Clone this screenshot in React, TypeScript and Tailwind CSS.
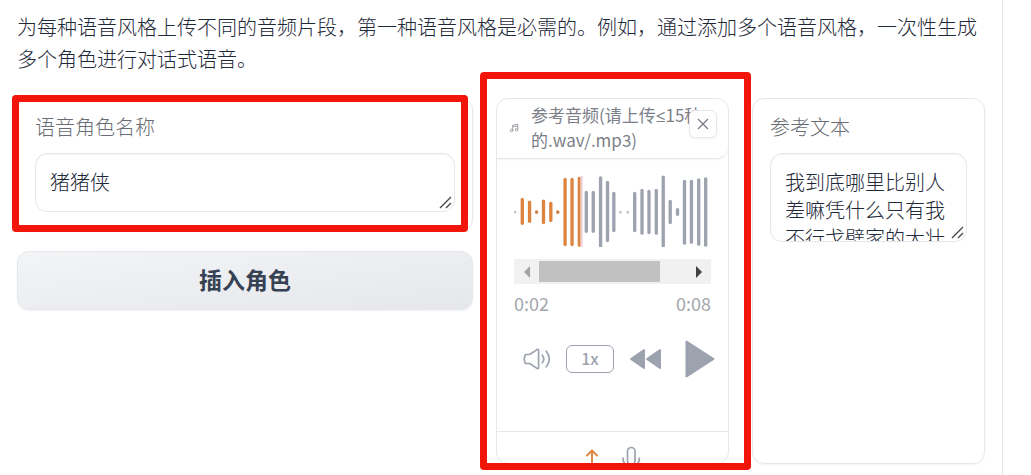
import { useState } from 'react';

// [x, top, bottom] of every wave form bar
const BARS: [number, number, number][] = [
  [3, 117, 118], [25, 79, 151], [47, 87, 145], [68, 117, 118], [89, 84, 149],
  [111, 91, 143], [132, 117, 118], [154, 19, 215], [175, 19, 215], [197, 16, 217],
  [218, 58, 175], [239, 58, 175], [261, 14, 219], [282, 28, 203], [301, 61, 173],
  [321, 117, 118], [343, 117, 118], [364, 61, 173], [386, 52, 181], [407, 55, 179],
  [429, 52, 181], [450, 12, 219], [471, 85, 149], [493, 110, 124], [514, 25, 211],
  [535, 25, 208], [557, 20, 214], [578, 17, 217],
];

const PLAYED = 204;

function barColor(x: number, top: number) {
  if (x < 10 || x === 321 || x === 343) return '#c3c5ca';
  if (x < PLAYED) return top > 100 ? '#c98046' : '#dd8440';
  return '#9ca3af';
}

function Waveform() {
  return (
    <svg viewBox="0 0 594 222" className="block h-[74px] w-full" fill="none" strokeLinecap="round">
      {BARS.map(([x, top, bottom]) => (
        <line
          key={x}
          x1={x}
          x2={x}
          y1={top}
          y2={bottom}
          stroke={barColor(x, top)}
          strokeWidth={x < 10 || x === 321 || x === 343 ? 8 : 10}
        />
      ))}
      <rect x={PLAYED - 4} y="9" width="7" height="213" fill="#f0d0d4" />
    </svg>
  );
}

function ResizeGrip() {
  return (
    <svg
      viewBox="0 0 14 14"
      className="pointer-events-none absolute right-0.5 bottom-0.5 size-3.5"
      stroke="#444"
      strokeWidth="1.3"
    >
      <path d="M1 12 12 1M7 12l5-5" />
    </svg>
  );
}

interface TextFieldProps {
  id: string;
  label: string;
  initial: string;
  size: string;
}

function TextField({ id, label, initial, size }: TextFieldProps) {
  const [value, setValue] = useState(initial);

  return (
    <div className="rounded-xl border border-gray-200 px-[17px] pt-3.5 pb-[18px] shadow-xs">
      <label htmlFor={id} className="mb-3 block text-xl leading-7 text-[#686c75]">
        {label}
      </label>
      <div className="relative">
        <textarea
          id={id}
          value={value}
          onChange={(e) => setValue(e.target.value)}
          className={`block w-full resize-none overflow-hidden rounded-xl border border-gray-200 px-3.5 pt-3.5 text-xl leading-7 text-gray-800 inset-shadow-xs outline-none ${size}`}
        />
        <ResizeGrip />
      </div>
    </div>
  );
}

function AudioPanel() {
  return (
    <div className="flex flex-col overflow-hidden rounded-xl border border-gray-200">
      {/* Label */}
      <div className="relative flex items-center gap-3 rounded-br-xl border-b border-gray-200 pt-1 pr-2.5 pb-1.5 pl-3 shadow-xs">
        <svg viewBox="0 0 24 24" className="size-2.5 shrink-0" fill="none" stroke="#8b8f97" strokeWidth="2">
          <path d="M9 18V5l12-2v13M9 9l12-2" />
          <circle cx="6" cy="18" r="3" />
          <circle cx="18" cy="16" r="3" />
        </svg>
        <p className="text-[17px] leading-6 font-normal text-[#7c8089]">
          参考音频(请上传<span className="font-['Open_Sans',sans-serif]">≤</span>15秒
          <br />
          的.wav/.mp3)
        </p>
        <button
          aria-label="清除"
          className="absolute top-[11px] right-[11px] flex size-7 items-center justify-center rounded-md border border-gray-200 bg-white shadow-xs"
        >
          <svg viewBox="0 0 12 12" className="size-3" stroke="#777b83" strokeWidth="1.3">
            <path d="M1 1l10 10M11 1 1 11" />
          </svg>
        </button>
      </div>

      {/* Player */}
      <div className="px-[17px] pt-3.5 pb-[52px]">
        <Waveform />
        <div className="mt-3 flex h-[25px] items-center bg-[#f1f1f1]">
          <button aria-label="向左滚动" className="flex h-full w-[25px] items-center justify-center">
            <svg viewBox="0 0 6 12" className="h-3 w-1.5" fill="#a3a3a3">
              <path d="M6 0v12L0 6z" />
            </svg>
          </button>
          <div className="flex h-[21px] flex-1">
            <div className="w-[82%] bg-[#c1c1c1]" />
          </div>
          <button aria-label="向右滚动" className="flex h-full w-[25px] items-center justify-center">
            <svg viewBox="0 0 6 12" className="h-3 w-1.5" fill="#404040">
              <path d="M0 0v12l6-6z" />
            </svg>
          </button>
        </div>
        <div className="mt-[7px] flex justify-between text-lg leading-6 font-normal text-[#a3a6ac]">
          <time>0:02</time>
          <time>0:08</time>
        </div>
        <div className="-mr-1 mt-6 flex h-10 items-center pl-2">
          <button aria-label="音量">
            <svg viewBox="0 0 30 24" className="h-6 w-[30px]" fill="none" stroke="#9ca3af" strokeWidth="1.700" strokeLinecap="round" strokeLinejoin="round">
              <path d="M3.500 7.500h4.200L15 2.600q1.600-.8 1.600.8v17.200q0 1.600-1.600.8L7.700 16.500H3.500Q1 12 3.500 7.500z" />
              <path d="M20.300 8.200q3 3.800 0 7.600M24.300 4.200q6 7.800 0 15.600" />
            </svg>
          </button>
          <button className="ml-3.5 h-7 w-12 rounded-md border border-[#9ca3af] pb-0.5 text-base leading-6 font-medium text-[#9ca3af]">
            1x
          </button>
          <button aria-label="快退" className="ml-4">
            <svg viewBox="0 0 31 22" className="h-[22px] w-[31px]" fill="#9ca3af" stroke="#9ca3af" strokeWidth="2" strokeLinejoin="round">
              <path d="M14 2v18L1 11zM30 2v18L17 11z" />
            </svg>
          </button>
          <button aria-label="播放" className="ml-auto">
            <svg viewBox="0 0 30 38" className="h-[38px] w-[30px]" fill="#9ca3af" stroke="#9ca3af" strokeWidth="2" strokeLinejoin="round">
              <path d="M1.500 1.500v35L28.500 19z" />
            </svg>
          </button>
        </div>
      </div>

      {/* Sources */}
      <div className="flex h-8 justify-center gap-[22px] border-t border-gray-200 pt-3.5">
        <button aria-label="上传" className="h-5">
          <svg viewBox="0 0 14 20" className="h-5 w-3.5" fill="none" stroke="#dd8440" strokeWidth="1.900" strokeLinecap="round" strokeLinejoin="round">
            <path d="M7 20V4.500M2 9.500l5-5 5 5" />
          </svg>
        </button>
        <button aria-label="录音" className="h-5">
          <svg viewBox="0 0 20 20" className="h-5 w-5" fill="none" stroke="#9ca3af" strokeWidth="1.700" strokeLinecap="round">
            <rect x="6.500" y="1.500" width="7.500" height="17" rx="3.700" />
            <path d="M2 12q0 8 8.200 8t8.200-8" />
          </svg>
        </button>
      </div>
    </div>
  );
}

export default function App() {
  return (
    <main className="mr-7 min-h-screen border-r border-gray-200 bg-white px-[17px] pt-[11px] font-['Noto_Sans_CJK_SC',sans-serif] font-light">
      <p className="text-xl leading-8 text-gray-800">
        为每种语音风格上传不同的音频片段，第一种语音风格是必需的。例如，通过添加多个语音风格，一次性生成多个角色进行对话式语音。
      </p>

      <div className="mt-[23px] grid grid-cols-[456fr_233fr_233fr] gap-[23px]">
        <div className="flex flex-col gap-5">
          <div className="relative">
            <TextField id="role-name" label="语音角色名称" initial="猪猪侠" size="h-[59px]" />
            <div className="pointer-events-none absolute -top-[3px] right-[5px] -bottom-px -left-[5px] rounded-sm border-[7px] border-[#f2150a]" />
          </div>
          <button className="h-[59px] rounded-xl border border-gray-200 bg-linear-to-br from-gray-100 to-gray-200 pb-0.5 text-[23px] font-bold text-gray-700 shadow-xs">
            插入角色
          </button>
        </div>

        <div className="relative">
          <AudioPanel />
          <div className="pointer-events-none absolute -top-[26px] -right-[22px] -bottom-1.5 -left-4 rounded-sm border-[7px] border-[#f2150a]" />
        </div>

        <div className="grid">
          <TextField
            id="reference-text"
            label="参考文本"
            initial="我到底哪里比别人差嘛凭什么只有我不行戈壁家的大壮"
            size="h-[89px]"
          />
        </div>
      </div>
    </main>
  );
}
